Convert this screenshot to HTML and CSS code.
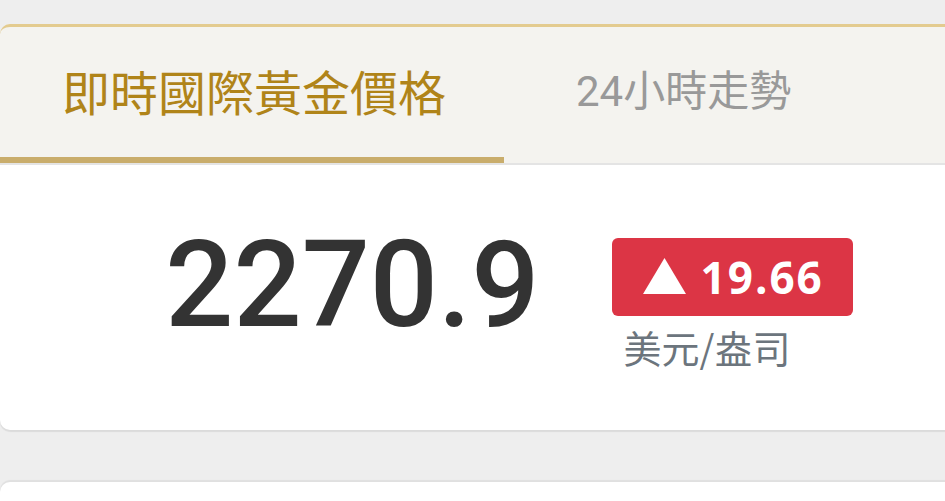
FILE: index.html
```html
<!DOCTYPE html>
<html lang="zh-Hant">
<head>
  <meta charset="UTF-8" />
  <title>即時國際黃金價格</title>
  <link rel="stylesheet" href="styles.css">
</head>
<body>
  <div class="wrap">
    <!-- 分頁 -->
    <div class="tabs">
      <div class="tab active">即時國際黃金價格</div>
      <div class="tab">24小時走勢</div>
    </div>

    <!-- 報價 -->
    <div class="card quote">
      <div class="price">2270.9</div>
      <div class="change">
        <div class="badge up">
          <svg class="arrow" width="43" height="36" viewBox="0 0 43 36"><polygon points="21.5,0 43,36 0,36" fill="#fff"/></svg>
          19.66
        </div>
        <div class="unit">美元/盎司</div>
      </div>
    </div>

    <div class="card next"></div>
  </div>
</body>
</html>
```

FILE: styles.css
```css
html,body{overflow:hidden}
body{margin:0;background:#eeeeee;font-family:Roboto,"Noto Sans CJK TC",sans-serif}
.wrap{width:1008px;padding-top:24px}
.tabs{display:flex;background:#f4f3ef;border-top:3px solid #e3cb8f;border-radius:10px 10px 0 0;height:136px;box-shadow:0 2px 0 #e4e4e4}
.tab{display:flex;align-items:center;padding:0 58px 10px 62px;font-size:48px;color:#999;box-sizing:border-box;border-bottom:6px solid transparent}
.tab + .tab{font-size:42px;padding-left:72px}
.tab.active{color:#b08419;border-bottom-color:#c9ad6c;padding-bottom:4px}
.card{background:#fff;border-radius:0 0 10px 10px;box-shadow:0 2px 1px rgba(0,0,0,.08)}
.quote{margin-top:2px;height:265px;display:flex;align-items:center;justify-content:center;gap:72px}
.price{font-size:120px;font-weight:500;color:#333;margin:-26px 0 0 10px}
.change{display:flex;flex-direction:column;align-items:flex-start;margin-top:12px}
.badge{display:flex;align-items:center;height:78px;padding:0 29px 0 31px;border-radius:6px;font-family:"Open Sans",sans-serif;font-weight:700;font-size:44px;color:#fff;letter-spacing:2px}
.badge.up{background:#dc3545}
.arrow{margin:0 15px 2px 0}
.unit{margin:8px 0 0 12px;font-family:"Noto Sans CJK TC",sans-serif;font-size:38px;line-height:1.2;color:#6c757d}
.next{margin-top:52px;height:60px;border-radius:10px 10px 0 0;box-shadow:0 -2px 1px rgba(0,0,0,.06)}
```
